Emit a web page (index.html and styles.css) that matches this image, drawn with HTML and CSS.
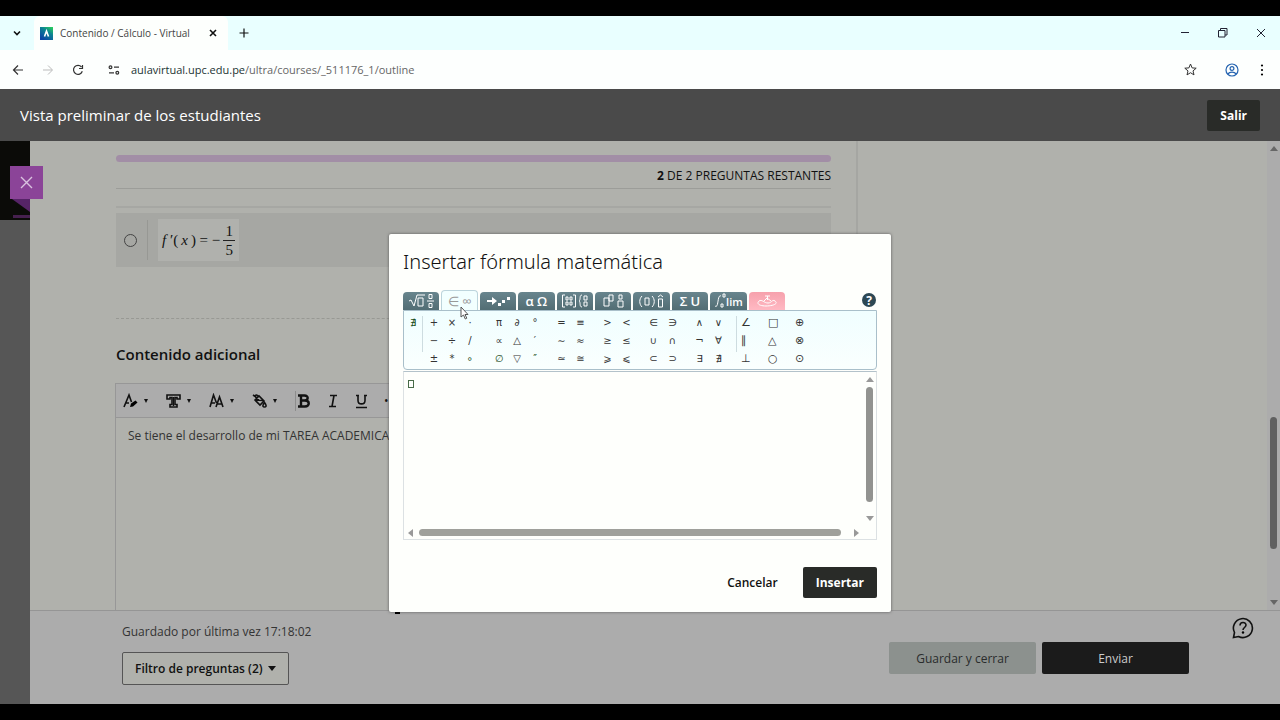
FILE: index.html
```
<!DOCTYPE html>
<html lang="es">
<head>
  <meta charset="UTF-8">
  <meta name="viewport" content="width=device-width, initial-scale=1.0">
  <title>Contenido / Cálculo - Virtual</title>
  <link rel="stylesheet" href="styles.css">
</head>
<body>
  <div class="tab-strip">
    <button class="tab-search" aria-label="Buscar pestañas"><svg width="10" height="10" viewBox="0 0 10 10"><path d="M2 3.5l3 3 3-3" class="line bold"/></svg></button>
    <div class="tab">
      <svg width="13" height="13" viewBox="0 0 13 13">
        <defs><linearGradient id="fav" x1="1" y1="0" x2="0.3" y2="1"><stop offset="0" stop-color="#2bd655"/><stop offset="0.45" stop-color="#0c8193"/><stop offset="1" stop-color="#0c44a5"/></linearGradient></defs>
        <rect width="13" height="13" fill="url(#fav)"/><path d="M4.5 9.5L6.5 4l2 5.5" fill="none" stroke="#fff" stroke-width="1.6"/>
      </svg>
      <span class="tab-title">Contenido / Cálculo - Virtual</span>
      <button aria-label="Cerrar pestaña"><svg width="8" height="8" viewBox="0 0 8 8"><path d="M1 1l6 6M7 1L1 7" class="line bold"/></svg></button>
    </div>
    <button class="new-tab" aria-label="Nueva pestaña"><svg width="10" height="10" viewBox="0 0 10 10"><path d="M5 .5v9M.5 5h9" class="line"/></svg></button>
    <div class="window-buttons">
      <button aria-label="Minimizar"><svg width="10" height="10" viewBox="0 0 10 10"><path d="M1 4.5h8" class="line thin"/></svg></button>
      <button aria-label="Restaurar"><svg width="10" height="10" viewBox="0 0 10 10"><path d="M.5 2.500h6.500v6.500H.5zM2.500 2.500v-2H9V7H7" class="line thin"/></svg></button>
      <button aria-label="Cerrar"><svg width="10" height="10" viewBox="0 0 10 10"><path d="M1 1l8 8M9 1L1 9" class="line thin"/></svg></button>
    </div>
  </div>

  <div class="address-row">
    <button aria-label="Atrás"><svg width="12" height="12" viewBox="0 0 12 12"><path d="M11 6H2M6 1.500L1.500 6 6 10.500" class="line"/></svg></button>
    <button class="disabled" aria-label="Adelante"><svg width="12" height="12" viewBox="0 0 12 12"><path d="M1 6h9M6 1.500L10.500 6 6 10.500" class="line thin"/></svg></button>
    <button aria-label="Recargar"><svg width="12" height="12" viewBox="0 0 12 12"><path d="M10.300 7.300A4.500 4.500 0 1 1 9.500 3M10.500 1v3.500H7" class="line"/></svg></button>
    <svg class="site-info" width="12" height="10" viewBox="0 0 12 10"><g class="line"><circle cx="2.500" cy="2.200" r="1.400"/><path d="M6 2.200h5M1 7.800h5"/><circle cx="9.300" cy="7.800" r="1.400"/></g></svg>
    <div class="url">aulavirtual.upc.edu.pe<span>/ultra/courses/_511176_1/outline</span></div>
    <button class="star" aria-label="Favoritos"><svg width="13" height="13" viewBox="0 0 13 13"><path d="M6.500 1l1.600 3.900 4.100.3-3.200 2.700 1 4-3.500-2.200L3 11.900l1-4L.8 5.200l4.100-.3z" class="line thin"/></svg></button>
    <button class="profile" aria-label="Perfil"><svg width="14" height="14" viewBox="0 0 14 14"><g class="line"><circle cx="7" cy="7" r="6"/><circle cx="7" cy="5.500" r="1.900"/><path d="M2.800 11c2-2.400 6.400-2.400 8.400 0"/></g></svg></button>
    <button aria-label="Menú"><svg width="4" height="12" viewBox="0 0 4 12"><circle cx="2" cy="1.500" r="1.100"/><circle cx="2" cy="6" r="1.100"/><circle cx="2" cy="10.500" r="1.100"/></svg></button>
  </div>

  <header class="banner">
    <span>Vista preliminar de los estudiantes</span>
    <button class="dark">Salir</button>
  </header>

  <div class="workspace">
    <aside class="side">
      <div class="side-top"></div>
      <svg class="ribbon" width="20" height="22" viewBox="0 0 20 22"><path d="M2 1h18v13z" fill="#562467"/><path d="M3 17h17v3H3z" fill="#46204e"/></svg>
      <button class="close-panel" aria-label="Cerrar"><svg width="13" height="13" viewBox="0 0 13 13"><path d="M1 1l11 11M12 1L1 12" fill="none" stroke="#d9c3df" stroke-width="1.400"/></svg></button>
    </aside>

    <div class="panel">
      <div class="content">
        <main class="assessment">
          <div class="progress"></div>
          <p class="remaining"><b>2</b> DE 2 PREGUNTAS RESTANTES</p>
          <div class="rule"></div>
          <div class="option">
            <input type="radio" id="answer" name="answer" aria-labelledby="formula">
            <label for="answer" id="formula" class="formula">
              <span><i>f</i> ′(&thinsp;<i>x</i>&thinsp;) = −</span>
              <span class="fraction"><span>1</span><span>5</span></span>
            </label>
          </div>
          <div class="dashed"></div>
          <h2>Contenido adicional</h2>
          <div class="editor">
            <div class="editor-tools">
              <button class="menu" aria-label="Estilo"><svg width="15" height="16" viewBox="0 0 15 16"><path d="M1 14L6 2l2.500 7M3 10h3" class="line bold"/><path d="M7 14l1-3.500 4.500-3 2 2-4.500 4z"/></svg></button>
              <button class="menu" aria-label="Tipo de letra"><svg width="15" height="16" viewBox="0 0 15 16"><path d="M1 2h13v4h-3V4.500H9v7h2V14H4v-2.500h2v-7H4V6H1z" class="line bold"/><path d="M7.500 4v9" class="line"/></svg></button>
              <button class="menu" aria-label="Tamaño"><svg width="15" height="16" viewBox="0 0 15 16"><path d="M1 14L4.500 2l3 8M2 10h4M7 14l3.500-10L14 14M8 11h5" class="line bold"/></svg></button>
              <button class="menu" aria-label="Color"><svg width="15" height="16" viewBox="0 0 15 16"><path d="M1 2l3 2M3 7l4-4 5 5-4 4zM3 7l8 .5M6 3c-3-3-4 2 1 4" class="line bold"/><path d="M12.500 9.500c3 4 1 4.500 0 4.500s-3-.5 0-4.500z" class="line bold"/></svg></button>
              <span class="divider"></span>
              <button aria-label="Negrita"><svg width="14" height="16" viewBox="0 0 14 16"><path d="M1 2.500h6.500c4.500 0 4 5 0 5H4M1 13.500h7c5 0 5-6 0-6M4 2.500v11" fill="none" stroke="#111" stroke-width="2.400"/></svg></button>
              <button aria-label="Cursiva"><svg width="14" height="16" viewBox="0 0 14 16"><path d="M4 2.500h7M3 13.500h7M8 2.500l-2 11" class="line bold"/></svg></button>
              <button aria-label="Subrayado"><svg width="14" height="16" viewBox="0 0 14 16"><path d="M1 2.500h3M9 2.500h3M3 2.500v5c0 4.500 7 4.500 7 0v-5M1 14.500h11" class="line bold"/></svg></button>
              <button aria-label="Más">•••</button>
            </div>
            <textarea aria-label="Contenido adicional">Se tiene el desarrollo de mi TAREA ACADEMICA</textarea>
          </div>
        </main>
        <div class="page-scroll"><span class="up"></span><span class="thumb"></span><span class="down"></span></div>
      </div>

      <footer>
        <div class="saved">
          <p>Guardado por última vez 17:18:02</p>
          <button class="filter">Filtro de preguntas (2) <span class="down"></span></button>
        </div>
        <div class="actions">
          <button class="save">Guardar y cerrar</button>
          <button class="send">Enviar</button>
        </div>
        <button class="help" aria-label="Ayuda"><svg width="22" height="22" viewBox="0 0 22 22"><path d="M1.500 20.500l1-5A9.500 9.500 0 1 1 6.500 19.500zM8 8.500c0-4 6-4 6-.5 0 2.500-3 2.500-3 5" class="line bold"/><circle cx="11" cy="15.500" r="1.200"/></svg></button>
      </footer>
    </div>

    <div class="overlay">
      <section class="dialog" role="dialog" aria-labelledby="dialog-title">
        <h1 id="dialog-title">Insertar fórmula matemática</h1>
        <div class="formula-head">
          <div class="formula-tabs">
            <button aria-label="General"><svg width="28" height="16" viewBox="0 0 28 16"><path d="M2 8l2-1 3 6 3-11h8M11 5h5v8h-5zM22 1.500h3v4h-3zM20 8h7M22 10.500h3v4h-3z"/></svg></button>
            <button class="active">∈ ∞</button>
            <button aria-label="Flechas"><svg width="28" height="16" viewBox="0 0 28 16"><path d="M3 8h7" stroke-width="2"/><path class="fill" d="M8 4l5 4-5 4zM14 10h3v3h-3zM18 7h3v3h-3zM23 4h3v3h-3z"/></svg></button>
            <button>α Ω</button>
            <button aria-label="Matrices"><svg width="28" height="16" viewBox="0 0 28 16"><path d="M4 2H1.500v12H4M12 2h2.500v12H12M5 4h2v3H5zM9 4h2v3H9zM5 9h2v3H5zM9 9h2v3H9zM21 2c-3 0-1 5-3 6 2 1 0 6 3 6M23 3h3v4h-3zM23 9h3v4h-3z"/></svg></button>
            <button aria-label="Índices"><svg width="28" height="16" viewBox="0 0 28 16"><path d="M5 5h5v8H5zM10 2h4v6h-4zM20 2h3v4h-3zM19 8h5v6h-5z"/></svg></button>
            <button aria-label="Paréntesis"><svg width="28" height="16" viewBox="0 0 28 16"><path d="M4 3c-3 3-3 8 0 11M14 3c3 3 3 8 0 11M7 5h4v7H7zM20 4l2.500-2L25 4M20.500 6h4v8h-4z"/></svg></button>
            <button>Σ U</button>
            <button><svg width="12" height="16" viewBox="0 0 12 16"><path d="M7 3c-4-2-2 13-6 10M9 1h2v3H9zM7 11h2v3H7z"/></svg><small>lim</small></button>
            <button class="pink" aria-label="Química"><svg width="28" height="16" viewBox="0 0 28 16"><path d="M12 3h5M14.500 3v4M11 8l3-3 4 3M6 8c-3 3 1 5 7 5s13-2 9-5c-3-2-3 2-7 2s-6-4-9-2z"/></svg></button>
          </div>
          <button class="formula-help" aria-label="Ayuda">?</button>
        </div>
        <div class="symbols">
          <div class="group one"><button class="green">∄</button></div>
          <div class="group three ruled"><button>+</button><button>×</button><button>·</button><button>−</button><button>÷</button><button>/</button><button>±</button><button>*</button><button class="green">∘</button></div>
          <div class="group three"><button>π</button><button>∂</button><button>°</button><button>∝</button><button>△</button><button>′</button><button class="green">∅</button><button>▽</button><button class="green">″</button></div>
          <div class="group"><button>=</button><button>≡</button><button>∼</button><button>≈</button><button>≃</button><button>≅</button></div>
          <div class="group"><button>&gt;</button><button>&lt;</button><button>≥</button><button>≤</button><button>⩾</button><button>⩽</button></div>
          <div class="group"><button>∈</button><button>∋</button><button>∪</button><button>∩</button><button>⊂</button><button>⊃</button></div>
          <div class="group"><button>∧</button><button>∨</button><button>¬</button><button>∀</button><button>∃</button><button>∄</button></div>
          <div class="group wide ruled"><button>∠</button><button>□</button><button>⊕</button><button>∥</button><button>△</button><button>⊗</button><button>⊥</button><button>○</button><button>⊙</button></div>
        </div>
        <div class="formula-box">
          <div class="canvas"><span class="slot"></span></div>
          <div class="v-scroll"><span class="up"></span><span class="thumb"></span><span class="down"></span></div>
          <div class="h-scroll"><span class="left"></span><span class="thumb"></span><span class="right"></span></div>
        </div>
        <div class="dialog-actions">
          <button class="cancel">Cancelar</button>
          <button class="dark">Insertar</button>
        </div>
        <span class="caret"></span>
        <svg class="pointer" width="9" height="14" viewBox="0 0 9 14"><path d="M1 1v10l2.500-2 1.800 4 1.500-.8L5 8.500h3z" fill="#fff" stroke="#555"/></svg>
      </section>
    </div>
  </div>
</body>
</html>
```
FILE: styles.css
```
* {
  box-sizing: border-box;
}

body {
  margin: 0;
  padding: 16px 0;
  min-height: 100vh;
  display: flex;
  flex-direction: column;
  background: #000;
  color: #111;
  font-family: "Open Sans", "Noto Sans", sans-serif;
  font-size: 12px;
}

button {
  display: flex;
  align-items: center;
  justify-content: center;
  padding: 0;
  border: 0;
  background: none;
  color: inherit;
  font: inherit;
}

p, h1, h2 {
  margin: 0;
}

.line {
  fill: none;
  stroke: currentColor;
  stroke-width: 1.2;
}

.bold {
  stroke-width: 1.6;
}

.thin {
  stroke-width: 1;
}

/* Browser window */
.tab-strip {
  display: flex;
  align-items: center;
  height: 34px;
  background: #e9ffff;
}

.tab-search {
  width: 34px;
}

.tab {
  display: flex;
  align-items: center;
  width: 194px;
  height: 34px;
  padding: 0 11px 0 6px;
  background: #fdfffd;
  border-radius: 6px 6px 0 0;
}

.tab-title {
  flex: 1;
  margin-left: 7px;
  font-size: 10px;
  white-space: nowrap;
  color: #444;
}

.new-tab {
  width: 32px;
}

.window-buttons {
  display: flex;
  gap: 28px;
  margin-left: auto;
  padding-right: 14px;
  color: #223;
}

.address-row {
  display: flex;
  align-items: center;
  height: 39px;
  padding: 0 16px 0 12px;
  background: #fdfffe;
  color: #333;
}

.address-row button {
  margin-right: 18px;
}

.address-row button:last-child {
  margin-right: 0;
}

.address-row .disabled {
  color: #bbb;
}

.site-info {
  margin-left: 6px;
}

.url {
  flex: 1;
  margin-left: 11px;
  font-size: 11px;
  color: #233;
}

.url span {
  color: #666;
}

.address-row .star {
  margin-right: 28px;
}

.address-row .profile {
  margin-right: 21px;
  color: #2463b0;
}

.banner {
  display: flex;
  align-items: center;
  justify-content: space-between;
  height: 52px;
  padding: 0 20px;
  background: #4a4a4a;
  color: #fff;
  font-size: 15px;
}

.dark {
  height: 31px;
  padding: 0 13px;
  border-radius: 2px;
  background: #292b28;
  color: #fff;
  font-size: 12px;
  font-weight: 700;
}

/* Course page */
.workspace {
  position: relative;
  flex: 1;
  display: flex;
}

.side {
  position: relative;
  width: 30px;
  background: #565656;
}

.side-top {
  height: 79px;
  background: #0b0b08;
}

.ribbon {
  position: absolute;
  top: 57px;
  left: 10px;
}

.close-panel {
  position: absolute;
  z-index: 1;
  top: 25px;
  left: 10px;
  width: 33px;
  height: 33px;
  background: #8b4498;
}

.panel {
  flex: 1;
  display: flex;
  flex-direction: column;
  background: #b0b1ac;
}

.content {
  flex: 1;
  display: flex;
  justify-content: space-between;
}

.assessment {
  width: 828px;
  display: flex;
  flex-direction: column;
  padding: 14px 25px 0 86px;
  border-right: 2px solid #a5a6a2;
}

.progress {
  height: 7px;
  border-radius: 4px;
  background: #a28ea6;
}

.remaining {
  height: 27px;
  line-height: 27px;
  border-bottom: 1px solid #9c9d99;
  text-align: right;
}

.rule {
  height: 19px;
  margin-bottom: 5px;
  border-bottom: 2px solid #a6a7a3;
}

.option {
  display: flex;
  align-items: center;
  height: 54px;
  padding-left: 8px;
  background: #a6a7a3;
}

.option input {
  appearance: none;
  width: 13px;
  height: 13px;
  margin: 0 10px 0 0;
  border: 1px solid #444;
  border-radius: 50%;
}

.formula {
  display: flex;
  align-items: center;
  position: relative;
  gap: 3px;
  height: 42px;
  margin-left: 11px;
  padding: 0 4px;
  background: #b0b1ad;
  font-family: "Liberation Serif", serif;
  font-size: 15px;
}

.formula::before {
  content: "";
  position: absolute;
  left: -11px;
  width: 1px;
  height: 40px;
  background: #979894;
}

.fraction {
  display: grid;
  width: 12px;
  text-align: center;
  line-height: 18px;
}

.fraction span:first-child {
  border-bottom: 1px solid #222;
}

.dashed {
  height: 52px;
  border-bottom: 1px dashed #989994;
}

h2 {
  padding: 23px 0 17px;
  font-size: 15px;
  line-height: 24px;
  font-weight: 600;
}

.editor {
  flex: 1;
  display: flex;
  flex-direction: column;
  margin-left: -1px;
  border: 1px solid #979797;
  border-bottom: 0;
}

.editor-tools {
  display: flex;
  align-items: center;
  gap: 15px;
  height: 34px;
  padding-left: 7px;
  border-bottom: 1px solid #979797;
  background: #acacac;
}

.menu {
  margin-right: 3px;
}

.menu::after {
  content: "";
  margin-left: 6px;
  border: 2px solid transparent;
  border-top: 4px solid #111;
  border-bottom: 0;
}

.divider {
  height: 20px;
  margin-right: -14px;
  border-left: 1px solid #8d8d8d;
}

.editor textarea {
  flex: 1;
  padding: 9px 12px;
  border: 0;
  resize: none;
  outline: 0;
  background: none;
  color: #333;
  font: inherit;
}

.page-scroll {
  display: flex;
  flex-direction: column;
  align-items: center;
  width: 13px;
  padding: 5px 0;
  background: #acacac;
}

.page-scroll .thumb {
  width: 7px;
  height: 132px;
  margin-top: auto;
  margin-bottom: 51px;
  border-radius: 4px;
  background: #606060;
}

.up, .down, .left, .right {
  border: 4px solid transparent;
}

.up {
  border-top: 0;
  border-bottom: 5px solid #666;
}

.down {
  border-bottom: 0;
  border-top: 5px solid #666;
}

.left {
  border-left: 0;
  border-right: 5px solid #999;
}

.right {
  border-right: 0;
  border-left: 5px solid #999;
}

footer {
  display: flex;
  height: 94px;
  padding: 0 26px 0 92px;
  border-top: 1px solid #959595;
  background: #acacac;
}

.saved {
  flex: 1;
  padding-top: 12px;
  color: #333;
}

.saved p {
  line-height: 18px;
}

.filter {
  gap: 5px;
  height: 33px;
  margin-top: 11px;
  padding: 0 12px;
  border: 1px solid #555;
  border-radius: 2px;
  background: #b0b1ac;
  color: #111;
  font-weight: 600;
}

.filter .down {
  border-top-color: #111;
}

.actions {
  display: flex;
  gap: 6px;
  padding-top: 31px;
}

.actions button {
  width: 147px;
  height: 32px;
  border-radius: 2px;
}

.save {
  background: #8c918e;
  color: #2a2c2c;
}

.send {
  background: #1b1b1b;
  color: #ccc;
}

.help {
  height: 22px;
  margin: 6px 0 0 43px;
}

/* Formula dialog */
.overlay {
  position: absolute;
  inset: 0;
  z-index: 2;
  display: flex;
  align-items: center;
  justify-content: center;
  padding-top: 1px;
}

.dialog {
  position: relative;
  width: 502px;
  padding: 12px 14px 14px;
  border-radius: 2px;
  background: #fefffc;
  box-shadow: 0 0 3px #555;
}

h1 {
  font-family: "Noto Sans", "Open Sans", sans-serif;
  font-size: 20px;
  font-weight: 300;
  line-height: 32px;
}

.formula-head {
  display: flex;
  align-items: center;
  justify-content: space-between;
  height: 20px;
  margin-top: 12px;
}

.formula-tabs {
  display: grid;
  grid-template-columns: repeat(10, 1fr);
  align-items: end;
  gap: 2px;
  width: 382px;
  height: 20px;
}

.formula-tabs button {
  height: 18px;
  border-radius: 4px 4px 0 0;
  background: linear-gradient(#68858d, #526d74);
  color: #fff;
  font-size: 13px;
  font-weight: 600;
}

.formula-tabs .active {
  height: 20px;
  border: 1px solid #bcd4dc;
  border-bottom: 0;
  background: #f2ffff;
  color: #999;
  font-weight: 400;
}

.formula-tabs .pink {
  background: linear-gradient(#f6a1ac, #ffb9c3);
}

.formula-tabs path {
  fill: none;
  stroke: #fff;
}

.formula-tabs .fill {
  fill: #fff;
  stroke: none;
}

.formula-tabs small {
  font-size: 11px;
}

.formula-help {
  width: 14px;
  height: 14px;
  margin-right: 1px;
  border-radius: 50%;
  background: #2d4854;
  color: #fff;
  font-weight: 700;
}

.symbols {
  display: flex;
  gap: 8px;
  height: 60px;
  padding-top: 2px;
  border: 1px solid #a9bfca;
  border-radius: 0 0 4px 4px;
  background: linear-gradient(#f0feff, #fafffe);
  color: #333;
  font-family: "DejaVu Sans", sans-serif;
  font-size: 10px;
}

.group {
  display: grid;
  grid-template-columns: repeat(2, 19px);
  grid-auto-rows: 18px;
}

.one {
  grid-template-columns: 18px;
  margin-right: -8px;
  font-style: italic;
}

.three {
  grid-template-columns: repeat(3, 18px);
  padding-left: 3px;
}

.wide {
  grid-template-columns: repeat(3, 27px);
  padding-left: 5px;
}

.ruled {
  background: linear-gradient(#cddce0, #cddce0) 0 3px / 1px 36px no-repeat;
}

.wide button {
  justify-content: start;
  font-size: 11px;
}

.green {
  color: #174d20;
}

.formula-box {
  display: grid;
  grid-template-columns: 1fr 13px;
  grid-template-rows: 1fr 13px;
  height: 169px;
  margin-top: 1px;
  border: 1px solid #dce1e3;
  border-top-color: #b3c2ca;
}

.canvas {
  padding: 8px 4px;
}

.slot {
  display: block;
  width: 6px;
  height: 8px;
  border: 1px solid #486b48;
}

.v-scroll {
  display: flex;
  flex-direction: column;
  align-items: center;
  gap: 5px;
  padding: 5px 0;
}

.v-scroll .thumb {
  flex: 1;
  width: 7px;
  margin-bottom: 9px;
  border-radius: 4px;
  background: #929390;
}

.v-scroll .up {
  border-bottom-color: #999;
}

.v-scroll .down {
  border-top-color: #999;
}

.h-scroll {
  display: flex;
  align-items: center;
  gap: 6px;
  padding: 0 4px;
}

.h-scroll .thumb {
  flex: 1;
  height: 7px;
  margin-right: 7px;
  border-radius: 4px;
  background: #9fa09b;
}

.dialog-actions {
  display: flex;
  justify-content: flex-end;
  gap: 25px;
  margin-top: 27px;
}

.cancel {
  font-weight: 600;
}

.caret {
  position: absolute;
  left: 6px;
  bottom: -2px;
  width: 5px;
  height: 2px;
  background: #000;
}

.pointer {
  position: absolute;
  top: 72px;
  left: 71px;
}
```
